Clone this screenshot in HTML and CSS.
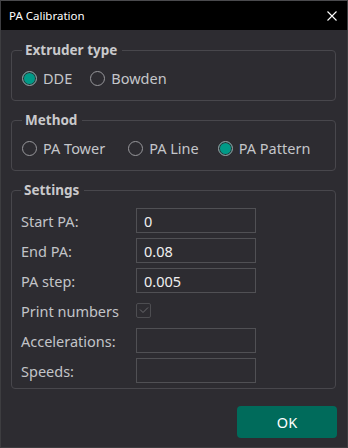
FILE: index.html
```html
<!DOCTYPE html>
<html>
<head>
<meta charset="utf-8">
<link rel="stylesheet" href="styles.css">
</head>
<body>
<div class="window">
  <div class="titlebar">
    <span class="title">PA Calibration</span>
    <svg class="close" width="10" height="10" viewBox="0 0 10 10"><path d="M0.5 0.5L9.5 9.5M9.5 0.5L0.5 9.5" stroke="#fff" stroke-width="1.1" fill="none"/></svg>
  </div>
  <div class="content">
    <fieldset class="group g1">
      <legend>Extruder type</legend>
      <div class="radios">
        <label class="radio on"><span class="dot"></span>DDE</label>
        <label class="radio"><span class="dot"></span>Bowden</label>
      </div>
    </fieldset>
    <fieldset class="group g2">
      <legend>Method</legend>
      <div class="radios">
        <label class="radio"><span class="dot"></span>PA Tower</label>
        <label class="radio"><span class="dot"></span>PA Line</label>
        <label class="radio on"><span class="dot"></span>PA Pattern</label>
      </div>
    </fieldset>
    <fieldset class="group g3">
      <legend>Settings</legend>
      <div class="form">
        <span class="lbl">Start PA:</span><span class="input">0</span>
        <span class="lbl">End PA:</span><span class="input">0.08</span>
        <span class="lbl">PA step:</span><span class="input">0.005</span>
        <span class="lbl">Print numbers</span><span class="check-cell"><span class="check"><svg width="10" height="8" viewBox="0 0 10 8"><path d="M1 3.5L4 6.5L9 1.5" stroke="#6a6a6e" stroke-width="1" fill="none"/></svg></span></span>
        <span class="lbl">Accelerations:</span><span class="input"></span>
        <span class="lbl">Speeds:</span><span class="input"></span>
      </div>
    </fieldset>
    <div class="actions"><button class="ok">OK</button></div>
  </div>
</div>
</body>
</html>
```
FILE: styles.css
```css
* { box-sizing: border-box; }
html, body { margin: 0; padding: 0; background: #2d2c31; }
body { font-family: "Noto Sans", "Open Sans", sans-serif; }
.window {
  width: 348px; height: 448px;
  border: 1px solid #3d3d40;
  border-top: 1px solid #4a4a4d;
  background: #2d2c31;
  display: flex; flex-direction: column;
}
.titlebar {
  height: 29px; background: #000;
  display: flex; align-items: center; justify-content: space-between;
  padding: 0 10px 0 8px;
}
.title { color: #fff; font-size: 11.5px; font-family: "Noto Sans", sans-serif; }
.close { display: block; }
.content {
  padding: 12px 11px 0 10px;
  display: flex; flex-direction: column;
}
.group {
  margin: 0 0 11px 0;
  border: 1px solid #48474c;
  border-radius: 4px;
  padding: 10px 10px 12px 10px;
  min-width: 0;
}
.group legend {
  padding: 0 5px 0 3px;
  font-weight: bold;
  font-size: 13.5px;
  line-height: 16px;
  color: #c9c9cb;
}
.radios { display: flex; height: 20px; align-items: center; }
.radio {
  display: flex; align-items: center;
  color: #c4c6ca; font-size: 14.5px;
}
.g1 .radio { margin-right: 18px; }
.g2 .radio:nth-child(1) { margin-right: 23px; }
.g2 .radio:nth-child(2) { margin-right: 19px; }
.dot {
  width: 15px; height: 15px; border-radius: 50%;
  border: 1px solid #98989c;
  margin-right: 6px;
  background: #2d2c31;
}
.radio.on .dot {
  border-color: #9a9a9e;
  background: #009a87;
  box-shadow: inset 0 0 0 1px #2d2c31;
}
.g3 { padding: 10px 10px 5px 9px; margin-bottom: 17px; }
.form {
  display: grid;
  grid-template-columns: 115px 120px;
  grid-auto-rows: 25px;
  row-gap: 5px;
  align-items: center;
}
.lbl { color: #c2c4c8; font-size: 14.5px; }
.input {
  height: 25px; border: 1px solid #505054;
  color: #f0f0f0; font-size: 14.5px;
  padding: 0 7px; display: flex; align-items: center;
}
.check-cell { display: flex; align-items: center; height: 25px; margin-top: -1px; }
.check {
  width: 15px; height: 15px; border: 1px solid #4d4d51; border-radius: 2px;
  display: flex; align-items: center; justify-content: center;
}
.actions { display: flex; justify-content: flex-end; margin-right: -1px; }
.ok {
  width: 100px; height: 32px;
  background: #006b5b; color: #fff;
  border: none; border-radius: 4px;
  font-family: "Noto Sans", sans-serif; font-size: 14.5px;
}
```
